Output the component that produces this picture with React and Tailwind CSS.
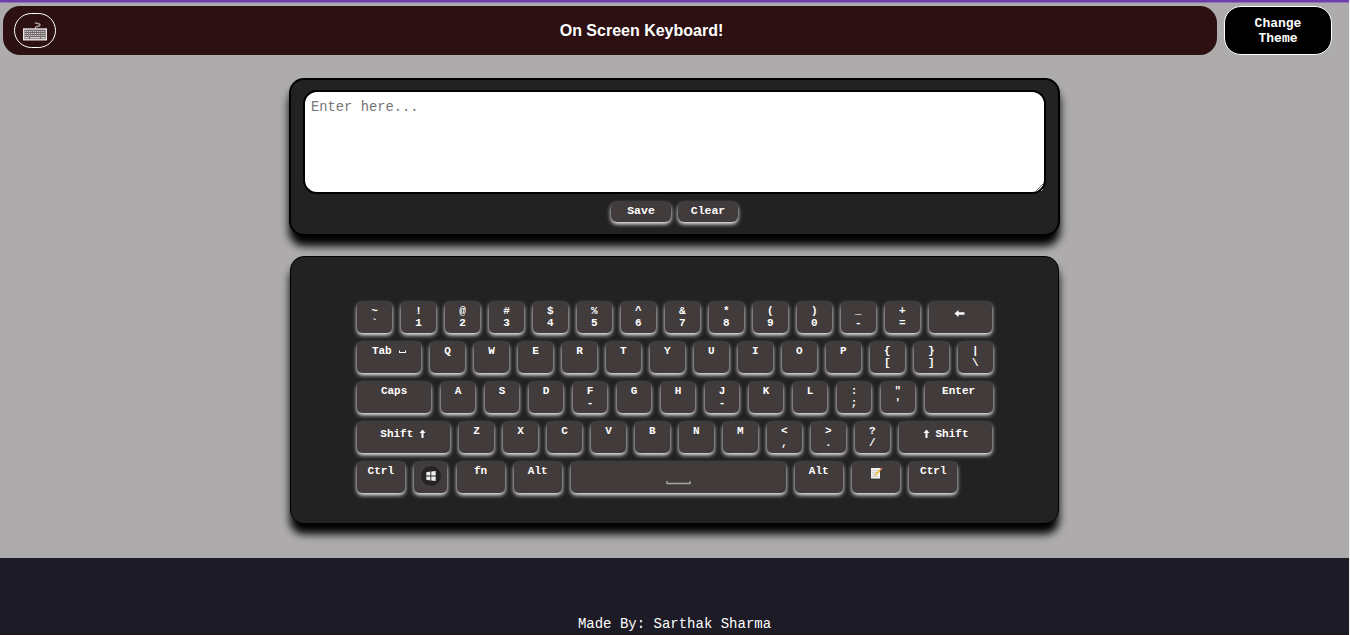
import React from "react";

const KEY =
  "flex h-[31px] shrink-0 flex-col items-center rounded-[5px] bg-[#423b3b] pt-[3px] text-[11px] leading-[12px] font-bold whitespace-pre text-white shadow-[0_2px_4px_#fff]";

function Key({ top, bottom, width = "w-[34.6px]", children }) {
  return (
    <div className={`${KEY} ${width}`}>
      {top && <span>{top}</span>}
      {bottom && <span>{bottom}</span>}
      {children}
    </div>
  );
}

function Keys({ list }) {
  return list.map(([top, bottom]) => <Key key={top} top={top} bottom={bottom} />);
}

const numbers = [["~", "`"], ["!", "1"], ["@", "2"], ["#", "3"], ["$", "4"], ["%", "5"], ["^", "6"], ["&", "7"], ["*", "8"], ["(", "9"], [")", "0"], ["_", "-"], ["+", "="]];
const upper = [["Q"], ["W"], ["E"], ["R"], ["T"], ["Y"], ["U"], ["I"], ["O"], ["P"], ["{", "["], ["}", "]"], ["|", "\\"]];
const home = [["A"], ["S"], ["D"], ["F", "-"], ["G"], ["H"], ["J", "-"], ["K"], ["L"], [":", ";"], ['"', "'"]];
const lower = [["Z"], ["X"], ["C"], ["V"], ["B"], ["N"], ["M"], ["<", ","], [">", "."], ["?", "/"]];

function UpArrow() {
  return (
    <svg className="h-[10px] w-[7px]" viewBox="0 0 7 10" fill="white">
      <path d="M3.500 .5 6.500 4H4.500V9H2.500V4H.5Z" />
    </svg>
  );
}

function KeyboardLogo() {
  return (
    <svg className="mt-[1px] h-[20px] w-[26px]" viewBox="0 0 26 20" fill="none">
      <path d="M13.500 7.500V6.500C14 5 18.500 5.500 18 3.800S15 2.500 12.800 1.800" stroke="#aaa2a2" strokeWidth="1.400" />
      <rect x="1.700" y="8" width="22.600" height="10.800" fill="#71686a" stroke="#e9e6e6" strokeWidth="1.400" />
      <path d="M3 10.500H23M3 12.500H23M3 14.500H23" stroke="#d0c6c8" strokeWidth="1.200" strokeDasharray="1.400 .6" />
      <path d="M3 16.700H7M8 16.700H18M19 16.700H23" stroke="#cfc6c7" strokeWidth="1.500" />
    </svg>
  );
}

export default function App() {
  return (
    <div className="h-[635px] w-full overflow-hidden border-r border-[#f1f1f1] bg-[#adabab] font-['Liberation_Mono','Courier_New',monospace]">
      <div className="h-[3px] border-b border-[#9470bd] bg-[#6b3fa5]" />
      <header className="flex gap-[7px] pt-[3px] pl-[3px]">
        <div className="flex h-[49px] w-[1214px] items-center rounded-[17px] bg-[#2c1012] pl-[11px]">
          <div className="flex h-[35px] w-[42px] shrink-0 items-center justify-center rounded-[18px] border border-white">
            <KeyboardLogo />
          </div>
          <h1 className="flex-1 pl-[10px] text-center font-['Liberation_Sans',Arial,sans-serif] text-[16px] leading-[20px] font-bold text-white">
            On Screen Keyboard!
          </h1>
        </div>
        <button className="h-[49px] w-[108px] rounded-[17px] border border-white bg-black px-5 text-[13px] leading-[15px] font-bold text-white">
          Change Theme
        </button>
      </header>

      <section className="mt-[23px] ml-[289px] flex h-[158px] w-[771px] flex-col items-center rounded-[15px] border-2 border-black bg-[#222] pt-[10px] shadow-[0_10px_8px_#000]">
        <textarea
          className="block h-[104px] w-[743px] resize rounded-[14px] border-2 border-black bg-white px-[6px] py-[7px] text-[13.8px] leading-[17px] text-black placeholder:text-[#757575]"
          placeholder="Enter here..."
        />
        <div className="mt-[8px] flex gap-[7px]">
          <button className="h-[20px] w-[60px] rounded-[6px] bg-[#423b3b] pb-[2px] text-[11.5px] leading-[14px] font-bold text-white shadow-[0_2px_4px_#fff]">Save</button>
          <button className="h-[20px] w-[60px] rounded-[6px] bg-[#423b3b] pb-[2px] text-[11.5px] leading-[14px] font-bold text-white shadow-[0_2px_4px_#fff]">Clear</button>
        </div>
      </section>

      <section className="mt-[20px] ml-[290px] flex h-[268px] w-[769px] flex-col gap-[9px] rounded-[14px] border border-black bg-[#222] pt-[45px] pl-[65.8px] shadow-[0_10px_8px_#000]">
        <div className="flex gap-[9.4px] pl-[.4px]">
          <Keys list={numbers} />
          <Key width="w-[63px]">
            <svg className="mt-[4px] h-[9px] w-[12px]" viewBox="0 0 12 9" fill="white">
              <path d="M.5 4.500 4.500 1V3.300H10.500V5.700H4.500V8Z" />
            </svg>
          </Key>
        </div>
        <div className="flex gap-[9.4px]">
          <Key width="w-[64px]">
            <div className="flex items-center gap-[7px]">
              <span>Tab</span>
              <svg className="mt-[2px] h-[4px] w-[7px]" viewBox="0 0 7 4" fill="none" stroke="white">
                <path d="M.5 .5V3M6.500 .5V3M.5 2.500H6.500" />
              </svg>
            </div>
          </Key>
          <Keys list={upper} />
        </div>
        <div className="flex gap-[9.4px]">
          <Key top="Caps" width="w-[74.6px]" />
          <Keys list={home} />
          <Key top="Enter" width="w-[68px]" />
        </div>
        <div className="flex gap-[9.4px]">
          <Key width="w-[93px]">
            <div className="flex items-center gap-[6px] pt-[3px]">
              <span>Shift</span>
              <UpArrow />
            </div>
          </Key>
          <Keys list={lower} />
          <Key width="w-[93px]">
            <div className="flex items-center gap-[6px] pt-[3px]">
              <UpArrow />
              <span>Shift</span>
            </div>
          </Key>
        </div>
        <div className="flex gap-[9.4px]">
          <Key top="Ctrl" width="w-[48px]" />
          <Key width="w-[33px]">
            <svg className="mt-[1px] h-[20px] w-[20px]" viewBox="0 0 20 20">
              <circle cx="10" cy="10" r="10" fill="#252323" />
              <path d="M5.300 6.200 9.400 5.600V9.600H5.300ZM10.300 5.500 14.700 4.900V9.600H10.300ZM5.300 10.500H9.400V14.400L5.300 13.800ZM10.300 10.500H14.700V15.100L10.300 14.500Z" fill="#eee" />
            </svg>
          </Key>
          <Key top="fn" width="w-[48px]" />
          <Key top="Alt" width="w-[47.6px]" />
          <Key width="w-[214.6px]">
            <svg className="mt-[15px] h-[5px] w-[25px]" viewBox="0 0 25 5" fill="none" stroke="#aaa5a5">
              <path d="M1 1V3.500H24V1" strokeWidth="1.400" />
            </svg>
          </Key>
          <Key top="Alt" width="w-[47.6px]" />
          <Key width="w-[48px]">
            <svg className="mt-[1px] h-[14px] w-[14px]" viewBox="0 0 14 14">
              <rect x="1.500" y="1.500" width="10" height="11.500" fill="#efefef" stroke="#2b2828" strokeWidth=".8" />
              <path d="M3 4.500H9M3 6.500H8M3 8.500H7M3 10.500H9" stroke="#c4c4c4" strokeWidth=".7" />
              <path d="M6 9.500 12 3" stroke="#efb929" strokeWidth="1.500" />
              <path d="M11.600 3.400 13 2" stroke="#d9798a" strokeWidth="1.500" />
            </svg>
          </Key>
          <Key top="Ctrl" width="w-[48px]" />
        </div>
      </section>

      <footer className="mt-[34px] flex h-[77px] items-end justify-center border-b border-[#25101c] bg-[#1c1b26] pb-px text-[14px] leading-[17px] text-white">
        <p>Made By: Sarthak Sharma</p>
      </footer>
    </div>
  );
}
